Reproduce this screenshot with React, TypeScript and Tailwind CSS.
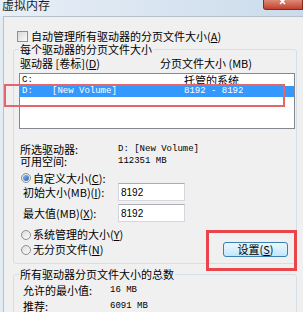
const cjk = "font-['Noto_Sans_CJK_SC',sans-serif]";
const mono = "font-['Liberation_Mono',monospace] text-[9px]";

function Key({ k }: { k: string }) {
  return (
    <span>
      (<span className="underline underline-offset-1">{k}</span>)
    </span>
  );
}

function Radio({ checked }: { checked?: boolean }) {
  return (
    <span className="w-[10px] h-[10px] rounded-full border border-[#8e8f8f] bg-gradient-to-br from-[#dcdcdc] to-[#fbfbfb] flex items-center justify-center shrink-0">
      {checked && (
        <span className="w-[6px] h-[6px] rounded-full bg-gradient-to-br from-[#8fc4f4] to-[#1c5fb5]" />
      )}
    </span>
  );
}

function TextBox({ value }: { value: string }) {
  return (
    <div className="w-[67px] h-[18px] bg-white border border-[#d4d8de] border-t-[#abadb3] flex items-center pl-[2px] font-['Liberation_Sans',sans-serif] text-[10px]">
      {value}
    </div>
  );
}

export default function App() {
  return (
    <div className={`relative w-[303px] h-[312px] overflow-hidden bg-[#f0f0f0] flex flex-col text-[11px] leading-[13px] text-black ${cjk}`}>
      {/* title bar */}
      <div className="h-[16px] shrink-0 flex items-start bg-gradient-to-r from-[#e8eff7] to-[#cbdbeb]">
        <span className="ml-[2px] -mt-[2px] text-[12px] leading-[14px] text-[#1e1e1e]">虚拟内存</span>
        <div className="ml-auto w-[40px] h-[10px] rounded-bl-[3px] bg-gradient-to-b from-[#dc8a78] to-[#c0402c] border border-t-0 border-[#86291d] flex justify-center">
          <svg width="8" height="5" viewBox="0 0 8 5">
            <path d="M1 -1 L6 4 M6 -1 L1 4" stroke="white" strokeWidth="1.6" />
          </svg>
        </div>
      </div>

      <div className="flex-1 flex">
        <div className="w-[3px] bg-[#e3ebf3]" />
        <div className="flex-1 border-t border-l border-[#b7c1cc] flex flex-col">
          {/* auto manage checkbox */}
          <div className="mt-[13px] pl-[13px] h-[13px] flex items-center gap-[3px]">
            <span className="w-[11px] h-[11px] border border-[#8e8f8f] bg-gradient-to-br from-[#d8d8d8] to-[#fafafa]" />
            <span>
              自动管理所有驱动器的分页文件大小<Key k="A" />
            </span>
          </div>

          {/* per drive */}
          <fieldset className="ml-[9px] w-[284px] border border-[#d5dfe5] rounded-[3px] pb-[6px]">
            <legend className="ml-[5px] px-[1px] leading-[13px]">每个驱动器的分页文件大小</legend>
            <div className="mt-px pl-[6px] flex">
              <span className="w-[140px]">
                驱动器 [卷标]<Key k="D" />
              </span>
              <span>分页文件大小 (MB)</span>
            </div>

            <div className="mt-[3px] ml-[5px] w-[276px] h-[56px] bg-white border border-[#828790] pt-px">
              <div className="h-[11px] pl-[2px] flex items-center">
                <span className={`w-[162px] ${mono}`}>C:</span>
                <span className="leading-[11px]">托管的系统</span>
              </div>
              <div className="h-[11px] pl-[2px] flex items-center bg-[#3399ff] text-white">
                <span className={`w-[30px] ${mono}`}>D:</span>
                <span className={`w-[132px] ${mono}`}>[New Volume]</span>
                <span className={mono}>8192 - 8192</span>
              </div>
            </div>

            <div className="mt-[14px] pl-[6px] flex flex-col leading-[12px]">
              <div className="flex items-center">
                <span className="w-[98px]">所选驱动器:</span>
                <span className={mono}>D:  [New Volume]</span>
              </div>
              <div className="flex items-center">
                <span className="w-[98px]">可用空间:</span>
                <span className={mono}>112351 MB</span>
              </div>
            </div>

            <div className="mt-[5px] pl-[7px] h-[12px] flex items-center gap-[2px]">
              <Radio checked />
              <span>
                自定义大小<Key k="C" />:
              </span>
            </div>
            <div className="-mt-px pl-[9px] flex items-center">
              <span className="w-[95px]">
                初始大小(MB)<Key k="I" />:
              </span>
              <TextBox value="8192" />
            </div>
            <div className="mt-[3px] pl-[9px] flex items-center">
              <span className="w-[95px]">
                最大值(MB)<Key k="X" />:
              </span>
              <TextBox value="8192" />
            </div>
            <div className="mt-[6px] pl-[7px] h-[13px] flex items-center gap-[2px]">
              <Radio />
              <span>
                系统管理的大小<Key k="Y" />
              </span>
            </div>
            <div className="mt-px pl-[7px] pr-[8px] h-[15px] flex items-center">
              <Radio />
              <span className="ml-[2px]">
                无分页文件<Key k="N" />
              </span>
              <button className="ml-auto w-[65px] h-[15px] rounded-[3px] border border-[#3c7fb1] bg-gradient-to-b from-[#eaf6fd] via-[#d9f0fc] to-[#bee6fd] text-[11px] leading-[13px] flex items-center justify-center">
                设置<Key k="S" />
              </button>
            </div>
          </fieldset>

          {/* totals */}
          <fieldset className="mt-[4px] ml-[9px] w-[284px] border border-[#d5dfe5] rounded-[3px] pb-[6px]">
            <legend className="ml-[5px] px-[1px] leading-[13px]">所有驱动器分页文件大小的总数</legend>
            <div className="mt-[3px] pl-[9px] flex items-center">
              <span className="w-[87px]">允许的最小值:</span>
              <span className={mono}>16 MB</span>
            </div>
            <div className="mt-[3px] pl-[9px] flex items-center">
              <span className="w-[87px]">推荐:</span>
              <span className={mono}>6091 MB</span>
            </div>
          </fieldset>
        </div>
      </div>

      {/* red annotation frames */}
      <div className="absolute left-[4px] top-[84px] w-[281px] h-[23px] border-2 border-[#e5666a]" />
      <div className="absolute left-[206px] top-[230px] w-[91px] h-[41px] border-[3px] border-[#e8464a]" />
    </div>
  );
}
